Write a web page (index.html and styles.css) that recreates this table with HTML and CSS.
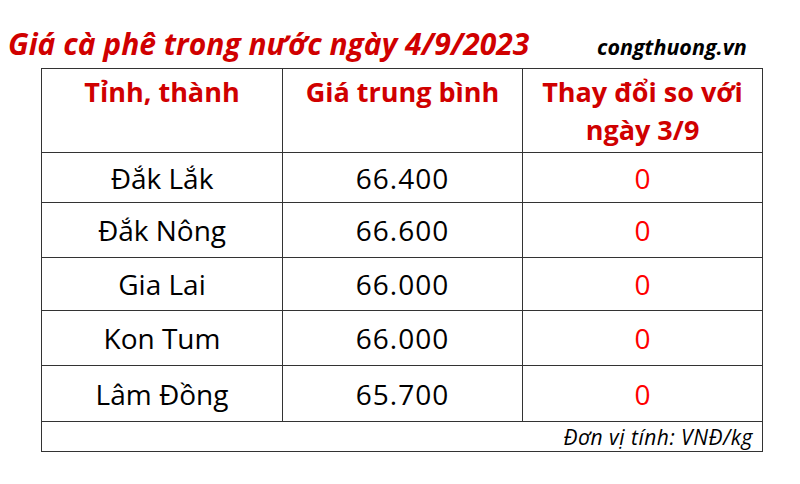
FILE: index.html
```html
<!DOCTYPE html>
<html lang="vi">
<head>
<meta charset="utf-8">
<link rel="stylesheet" href="styles.css">
</head>
<body>
<div class="page">
  <div class="titlebar">
    <h1 class="title">Giá cà phê trong nước ngày 4/9/2023</h1>
    <span class="source">congthuong.vn</span>
  </div>
  <div class="prices">
    <div class="cell head">Tỉnh, thành</div>
    <div class="cell head">Giá trung bình</div>
    <div class="cell head last">Thay đổi so với<br>ngày 3/9</div>

    <div class="cell">Đắk Lắk</div>
    <div class="cell num">66.400</div>
    <div class="cell last chg">0</div>

    <div class="cell">Đắk Nông</div>
    <div class="cell num">66.600</div>
    <div class="cell last chg">0</div>

    <div class="cell">Gia Lai</div>
    <div class="cell num">66.000</div>
    <div class="cell last chg">0</div>

    <div class="cell">Kon Tum</div>
    <div class="cell num">66.000</div>
    <div class="cell last chg">0</div>

    <div class="cell">Lâm Đồng</div>
    <div class="cell num">65.700</div>
    <div class="cell last chg">0</div>

    <div class="cell foot">Đơn vị tính: VNĐ/kg</div>
  </div>
</div>
</body>
</html>
```
FILE: styles.css
```css
html, body {
  margin: 0;
  padding: 0;
  background: #ffffff;
}
.page {
  width: 800px;
  height: 484px;
  font-family: "Open Sans", Lato, "Liberation Sans", sans-serif;
  color: #000;
}
.titlebar {
  display: flex;
  align-items: baseline;
  height: 68px;
  box-sizing: border-box;
  padding-top: 28px;
}
.title {
  margin: 0 0 0 8px;
  font-size: 30px;
  font-weight: 700;
  font-style: italic;
  color: #d00000;
  line-height: 32px;
  width: 589px;
  white-space: nowrap;
}
.source {
  font-size: 21.5px;
  font-weight: 700;
  font-style: italic;
  color: #000;
}
.prices {
  margin-left: 41px;
  width: 722px;
  box-sizing: border-box;
  border: 1px solid #333;
  display: grid;
  grid-template-columns: 241px 240px 1fr;
  grid-template-rows: 84px 50px 55px 53px 55px 56px 1fr;
  height: 384px;
}
.cell {
  border-right: 1px solid #333;
  border-bottom: 1px solid #333;
  display: flex;
  align-items: center;
  justify-content: center;
  font-size: 28px;
  line-height: 32px;
  text-align: center;
}
.cell.last { border-right: 0; }
.cell.head {
  align-items: flex-start;
  font-size: 27px;
  font-weight: 700;
  color: #d00000;
  line-height: 38px;
  padding-top: 4px;
}
.cell.num { letter-spacing: 1px; }
.cell.chg { color: #ff0000; }
.cell.foot {
  grid-column: 1 / 4;
  border-right: 0;
  border-bottom: 0;
  justify-content: flex-end;
  font-size: 21px;
  font-style: italic;
  letter-spacing: 0.5px;
  line-height: 24px;
  padding-right: 9px;
}
```
